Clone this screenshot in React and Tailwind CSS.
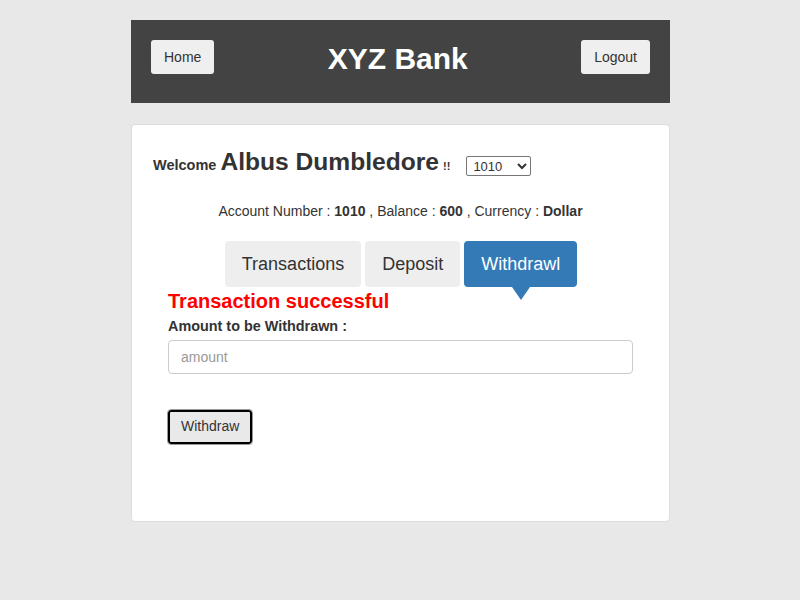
import { useState } from 'react';

const font = { fontFamily: '"Liberation Sans", Arial, sans-serif' };

const Tab = ({ label, active, onClick }) => (
  <button
    onClick={onClick}
    className={`relative h-[46px] px-[17px] rounded-[4px] text-[18px] ${
      active ? 'bg-[#337ab7] text-white' : 'bg-[#eeeeee] text-[#333]'
    }`}
  >
    {label}
    {active && (
      <span className="absolute left-1/2 -translate-x-1/2 top-full w-0 h-0 border-l-[9px] border-r-[9px] border-t-[13px] border-l-transparent border-r-transparent border-t-[#337ab7]" />
    )}
  </button>
);

export default function App() {
  const [tab, setTab] = useState('Withdrawl');

  return (
    <div style={font} className="min-h-[600px] bg-[#e8e8e8] pt-5 text-[#333]">
      <div className="w-[539px] ml-[131px]">
        <header className="h-[83px] bg-[#434343] flex items-start justify-between px-5 pt-5">
          <button className="h-[34px] px-[13px] bg-[#efefef] rounded-[3px] text-sm text-[#333]">Home</button>
          <h1 className="text-[30px] font-bold text-white leading-none mt-[4px]">XYZ Bank</h1>
          <button className="h-[34px] px-[13px] bg-[#efefef] rounded-[3px] text-sm text-[#333]">Logout</button>
        </header>

        <div className="mt-[21px] h-[398px] bg-white border border-[#dddddd] rounded-[4px] pt-[25px]">
          <div className="flex items-baseline pl-[21px] h-[26px]">
            <span className="text-[14.5px] font-bold">Welcome</span>
            <span className="text-[24.6px] font-bold ml-[4px] leading-none">Albus Dumbledore</span>
            <span className="text-[11px] font-bold ml-[4px]">!!</span>
            <select className="ml-[16px] h-[20px] w-[65px] border border-[#767676] rounded-[2px] text-[13px] pl-[2px] bg-white self-end">
              <option>1010</option>
            </select>
          </div>

          <p className="mt-[25px] text-center text-[14px]">
            Account Number : <b>1010</b> , Balance : <b>600</b> , Currency : <b>Dollar</b>
          </p>

          <div className="mt-[19px] flex justify-center gap-1 pl-[1px]">
            {['Transactions', 'Deposit', 'Withdrawl'].map((t) => (
              <Tab key={t} label={t} active={tab === t} onClick={() => setTab(t)} />
            ))}
          </div>

          <div className="px-[36px] mt-[1px]">
            <div className="text-[20px] font-bold text-[#ff0000] leading-[27px]">Transaction successful</div>
            <label className="block text-[14.4px] font-bold mt-[1px]">Amount to be Withdrawn :</label>
            <input
              placeholder="amount"
              className="mt-[2px] w-full h-[34px] border border-[#cccccc] rounded-[4px] px-[12px] text-sm placeholder:text-[#999]"
            />
            <button className="mt-[36px] h-[34px] px-[11px] bg-[#e9e9e9] text-[14px] border-2 border-black rounded-[3px] outline outline-1 outline-[#999]">
              Withdraw
            </button>
          </div>
        </div>
      </div>
    </div>
  );
}
